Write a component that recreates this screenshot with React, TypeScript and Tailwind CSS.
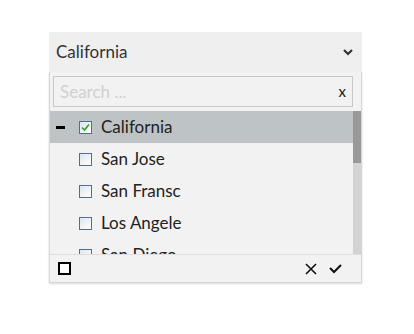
import React from "react";

const Box = ({ checked }: { checked?: boolean }) => (
  <span className="relative inline-flex h-[13px] w-[13px] shrink-0 items-center justify-center border border-[#4f6f8f] bg-gradient-to-br from-[#dfe6ec] to-[#ffffff]">
    {checked && (
      <svg width="9" height="9" viewBox="0 0 9 9">
        <path d="M1 4.5 L3.5 7 L8 1.5" stroke="#2f9e2f" strokeWidth="1.6" fill="none" />
      </svg>
    )}
  </span>
);

export default function App() {
  const rows = ["San Jose", "San Fransc", "Los Angele", "San Diego"];
  return (
    <div className="h-[334px] w-[414px] bg-white pt-[32px] pl-[49px]" style={{ fontFamily: "Lato, 'Open Sans', sans-serif" }}>
      <div className="w-[313px]">
        <div className="flex h-[40px] items-center justify-between bg-[#efefef] pl-[7px] pr-[8px] text-[17px] text-[#333]">
          <span>California</span>
          <svg width="12" height="12" viewBox="0 0 12 12">
            <path d="M2 4 L6 8 L10 4" stroke="#333" strokeWidth="2.2" fill="none" />
          </svg>
        </div>
        <div className="w-[313px] border-x border-b border-[#d6d6d6] bg-[#f2f2f2] shadow-[0_1px_2px_rgba(0,0,0,0.15)]">
          <div className="pl-[3px] pr-[8px] pt-[4px] pb-[4px]">
            <div className="flex h-[31px] items-center justify-between border border-[#c8c8c8] bg-[#f2f2f2] pl-[6px] pr-[6px]">
              <span className="text-[17px] text-[#d0d0d0]">Search ...</span>
              <span className="text-[15px] leading-none text-[#1a1a1a]">x</span>
            </div>
          </div>
          <div className="flex h-[143px] overflow-hidden">
            <div className="flex-1">
              <div className="flex h-[32px] items-center bg-[#bec3c6] text-[17px] text-[#222]">
                <span className="ml-[6px] mr-[14px] h-[3px] w-[9px] bg-black" />
                <Box checked />
                <span className="ml-[9px]">California</span>
              </div>
              {rows.map((r) => (
                <div key={r} className="flex h-[32px] items-center text-[17px] text-[#222]">
                  <span className="ml-[29px]" />
                  <Box />
                  <span className="ml-[9px]">{r}</span>
                </div>
              ))}
            </div>
            <div className="w-[8px] bg-[#d3d3d3]">
              <div className="h-[52px] bg-[#999]" />
            </div>
          </div>
          <div className="flex h-[28px] items-center justify-between border-t border-[#dedede] pl-[8px] pr-[19px]">
            <span className="h-[13px] w-[13px] border-2 border-black bg-white" />
            <div className="flex items-center gap-[12px]">
              <svg width="12" height="12" viewBox="0 0 12 12">
                <path d="M1 1 L11 11 M11 1 L1 11" stroke="#111" strokeWidth="1.6" />
              </svg>
              <svg width="13" height="11" viewBox="0 0 13 11">
                <path d="M1 5 L5 9 L12 2" stroke="#111" strokeWidth="2" fill="none" />
              </svg>
            </div>
          </div>
        </div>
      </div>
    </div>
  );
}
